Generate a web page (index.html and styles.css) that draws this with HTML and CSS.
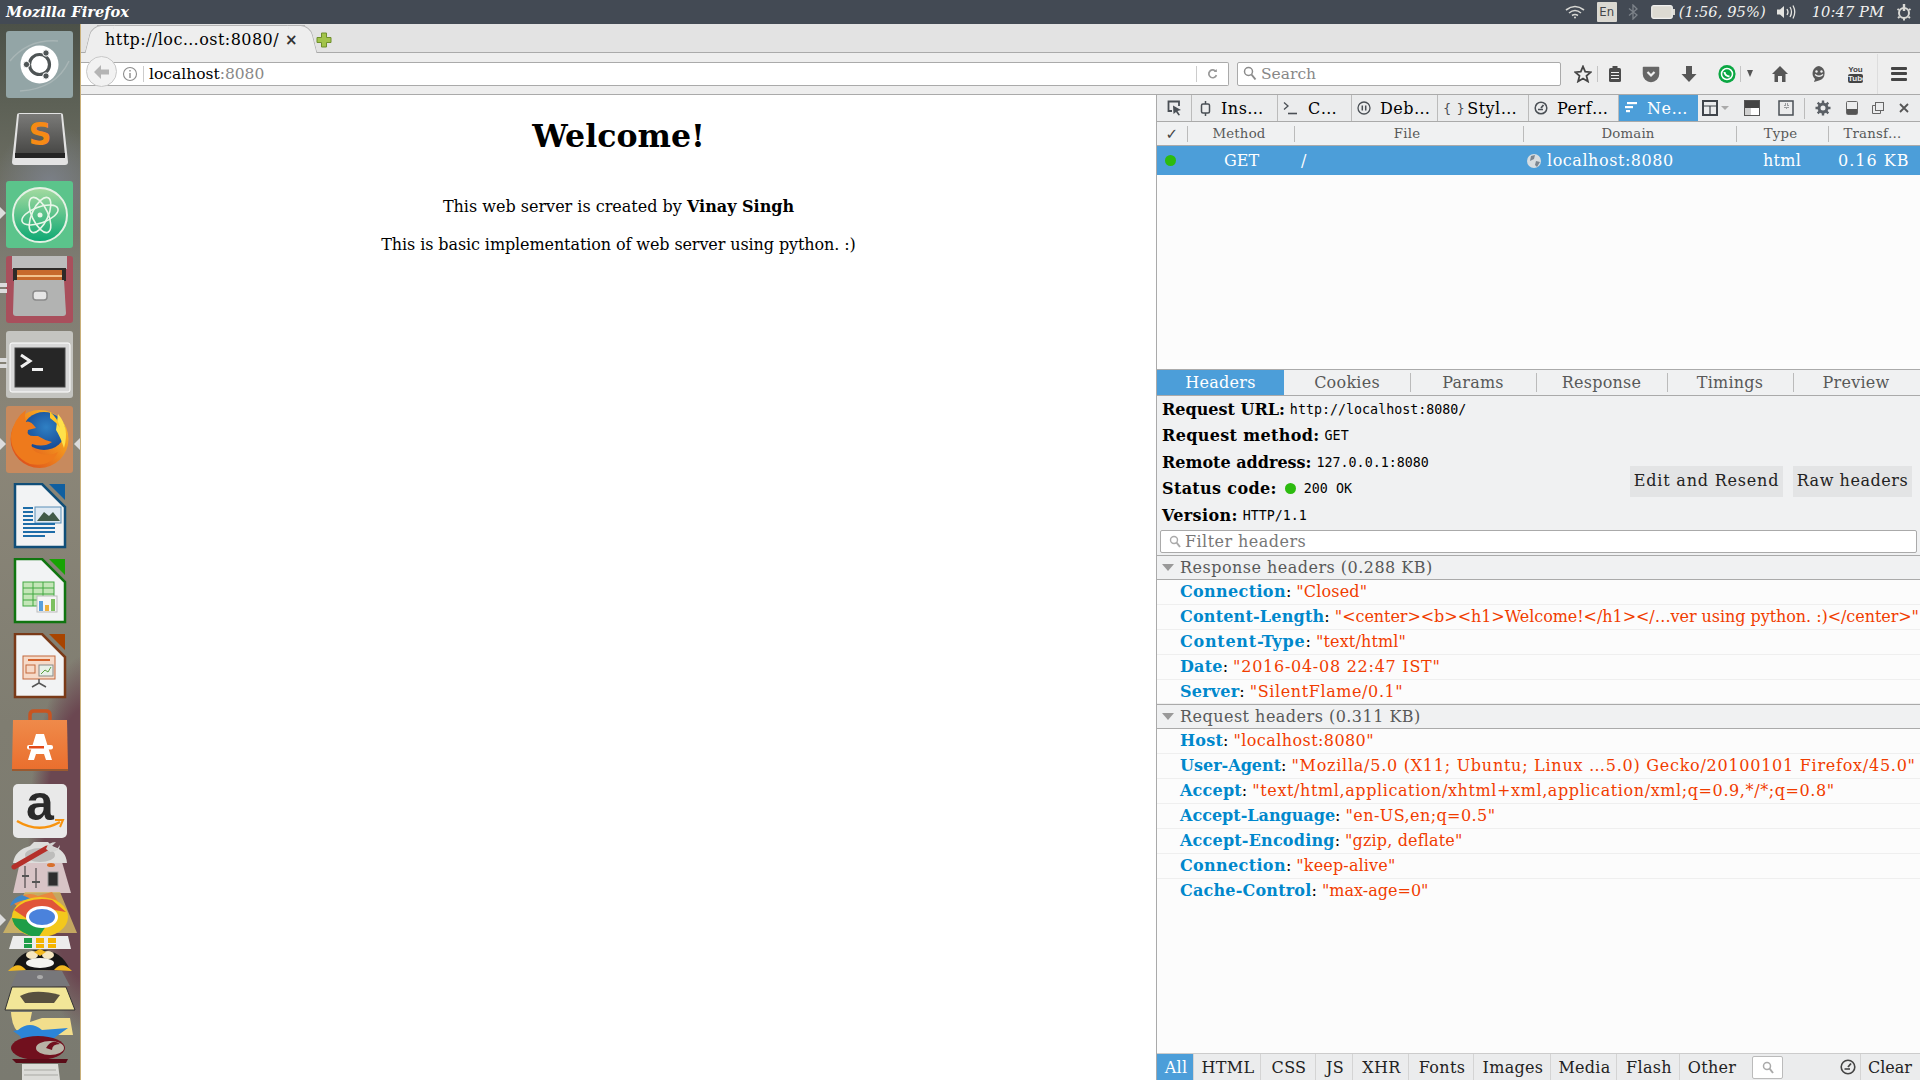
FILE: index.html
```html
<!DOCTYPE html>
<html lang="en">
<head>
  <meta charset="UTF-8" />
  <title>Mozilla Firefox</title>
  <link rel="stylesheet" href="styles.css">
</head>
<body>
  <header class="panel">
    <span class="panel-title">Mozilla Firefox</span>
    <div class="panel-tray">
      <svg class="tray-wifi" width="20" height="14" viewBox="0 0 20 14" fill="none" stroke="#d8d8d4" stroke-width="1.6"><path d="M1 5 Q10 -2 19 5"/><path d="M4 8 Q10 3 16 8"/><path d="M7 10.5 Q10 8.5 13 10.5"/><circle cx="10" cy="12.6" r="1" fill="#d8d8d4" stroke="none"/></svg>
      <span class="tray-lang">En</span>
      <svg class="tray-bt" width="10" height="16" viewBox="0 0 10 16" fill="none" stroke="#7d838a" stroke-width="1.3"><path d="M1 4.5 L9 11 L5 15 V1 L9 5 L1 11.5"/></svg>
      <svg class="tray-batt" width="24" height="14" viewBox="0 0 24 14"><rect x="0.7" y="0.7" width="20.6" height="12.6" rx="2" fill="#dcdad2" stroke="#f0f0ee" stroke-width="1.2"/><rect x="22" y="4" width="2" height="6" fill="#dcdad2"/></svg>
      <span class="tray-text tray-batt-text">(1:56, 95%)</span>
      <svg class="tray-vol" width="20" height="16" viewBox="0 0 20 16" fill="none" stroke="#e4e4e0" stroke-width="1.3"><path d="M1 5.5 H4 L8 2 V14 L4 10.5 H1 Z" fill="#e4e4e0" stroke="none"/><path d="M11 5 Q13 8 11 11"/><path d="M14 3 Q17 8 14 13"/><path d="M17 1.5 Q20.5 8 17 14.5"/></svg>
      <span class="tray-text tray-clock">10:47 PM</span>
      <svg class="tray-gear" width="16" height="18" viewBox="0 0 16 18" fill="none" stroke="#d8d8d4" stroke-width="2"><circle cx="8" cy="10" r="5"/><path d="M8 1 V8" stroke-width="2.4"/><path d="M1.5 6 L3 7 M14.5 6 L13 7 M2 15 L3.5 13.7 M14 15 L12.5 13.7 M8 15 V17.5"/></svg>
    </div>
  </header>

  <div class="desktop">
    <nav class="launcher">
      <div class="slot"><span class="tile tile-ubuntu">
        <svg width="67" height="67" viewBox="0 0 67 67"><path d="M4 30 Q22 8 52 10" fill="none" stroke="#b5c0c0" stroke-width="1.5" opacity=".6"/><path d="M14 60 Q50 58 63 30" fill="none" stroke="#b5c0c0" stroke-width="1.5" opacity=".6"/><circle cx="33.500" cy="33.500" r="19" fill="#fff"/><circle cx="33.500" cy="33.500" r="10" fill="none" stroke="#4e5455" stroke-width="3.200"/><circle cx="40" cy="22" r="3.200" fill="#4e5455" stroke="#fff"/><circle cx="20.500" cy="33.500" r="3.200" fill="#4e5455" stroke="#fff"/><circle cx="40" cy="45" r="3.200" fill="#4e5455" stroke="#fff"/></svg>
      </span></div>
      <div class="slot">
        <svg width="62" height="56" viewBox="0 0 62 56"><defs><linearGradient id="subTop" x1="0" y1="0" x2="0" y2="1"><stop offset="0" stop-color="#7a7a78"/><stop offset="1" stop-color="#454543"/></linearGradient></defs><path d="M3 50 L8 3 Q8 1 11 1 H51 Q54 1 54 3 L59 50 Q59 53 56 53 H6 Q3 53 3 50 Z" fill="#e3e3e3"/><path d="M6 44 L10 2 H52 L56 44 Z" fill="url(#subTop)"/><rect x="6" y="41" width="50" height="5" fill="#252525"/><text x="31" y="33" class="sublime-s">S</text></svg>
      </div>
      <div class="slot"><span class="tile tile-atom">
        <svg width="67" height="67" viewBox="0 0 67 67" fill="none"><defs><linearGradient id="atomFill" x1="0" y1="0" x2="0" y2="1"><stop offset="0" stop-color="#a5dba0"/><stop offset="1" stop-color="#0ca873"/></linearGradient></defs><circle cx="34" cy="34" r="27" fill="url(#atomFill)" stroke="#e4f1e4" stroke-width="2"/><g stroke="#e8f6e8" stroke-width="1.600"><ellipse cx="34" cy="34" rx="19" ry="8" transform="rotate(-20 34 34)"/><ellipse cx="34" cy="34" rx="19" ry="8" transform="rotate(65 34 34)"/><ellipse cx="34" cy="34" rx="19" ry="8" transform="rotate(115 34 34)"/></g><circle cx="34" cy="34" r="2.500" fill="#e8f6e8"/></svg>
      </span></div>
      <div class="slot"><span class="tile tile-files">
        <svg width="67" height="67" viewBox="0 0 67 67"><rect x="6" y="-1" width="55" height="14" fill="#bcbcbc"/><rect x="7" y="12" width="53" height="13" fill="#2e2a28"/><rect x="11" y="14" width="45" height="11" fill="#c76a2c"/><rect x="11" y="19" width="45" height="2" fill="#f2c28c"/><path d="M8 24 H58 L60 57 Q60 60 57 60 H10 Q7 60 7 57 Z" fill="#b2b3b2"/><rect x="27" y="35" width="14" height="9" rx="3" fill="#e6e6e6" stroke="#8a8a8a" stroke-width="1.500"/></svg>
      </span><i class="pip pip-files"></i></div>
      <div class="slot"><span class="tile tile-term">
        <svg width="67" height="67" viewBox="0 0 67 67"><rect x="4" y="12" width="60" height="49" rx="2" fill="#d8d8d8" stroke="#fff"/><rect x="9" y="17" width="50" height="39" fill="#262626" stroke="#444"/><path d="M15 24 L24 30 L15 36" fill="none" stroke="#f0f0f0" stroke-width="3"/><rect x="26" y="37" width="11" height="3" fill="#f0f0f0"/></svg>
      </span><i class="pip pip-term"></i></div>
      <div class="slot"><span class="tile tile-fox">
        <svg width="67" height="67" viewBox="0 0 67 67"><defs><radialGradient id="foxGlobe" cx=".55" cy=".4" r=".6"><stop offset="0" stop-color="#2f80c4"/><stop offset="1" stop-color="#174a94"/></radialGradient><linearGradient id="foxTail" x1="1" y1="0" x2="0" y2="1"><stop offset="0" stop-color="#ffd02a"/><stop offset=".45" stop-color="#f08a1e"/><stop offset="1" stop-color="#d8401a"/></linearGradient></defs><circle cx="33.500" cy="33" r="29" fill="url(#foxTail)"/><ellipse cx="38" cy="25" rx="21" ry="19" fill="url(#foxGlobe)"/><path d="M20 4 Q8 12 5 30 Q5 50 24 58 Q44 62 52 46 Q42 52 30 46 Q24 42 26 38 Q38 42 46 36 Q38 34 32 30 L28 30 Q20 30 22 24 L30 22 Q24 14 20 16 Q18 10 20 4 Z" fill="#ee7a1c"/><path d="M52 8 Q64 22 58 42 Q54 30 50 24 Z" fill="#ffe14a"/><path d="M44 6 Q52 12 54 22 Q50 16 44 12 Z" fill="#ffc628"/></svg>
      </span></div>
      <div class="slot">
        <svg class="doc" width="54" height="66" viewBox="0 0 54 66"><path d="M36 1 H52 V17 Z" fill="#105fa0"/><path d="M2 1 H29 L52 24 V64 H2 Z" fill="#f2f3f4" stroke="#104e78" stroke-width="2.500"/><rect x="22" y="24" width="26" height="16" fill="#dfe9f2" stroke="#5a90b8"/><path d="M24 38 L31 29 L36 33 L40 29 L47 38 Z" fill="#415a48"/><g fill="#1e6da8"><rect x="10" y="24" width="10" height="2"/><rect x="10" y="28" width="10" height="2"/><rect x="10" y="32" width="10" height="2"/><rect x="10" y="36" width="10" height="2"/><rect x="10" y="40" width="32" height="2"/><rect x="10" y="44" width="32" height="2"/><rect x="10" y="48" width="32" height="2"/><rect x="10" y="52" width="22" height="2"/></g></svg>
      </div>
      <div class="slot">
        <svg class="doc" width="54" height="66" viewBox="0 0 54 66"><path d="M36 1 H52 V17 Z" fill="#18a303"/><path d="M2 1 H29 L52 24 V64 H2 Z" fill="#f2f3f4" stroke="#107510" stroke-width="2.500"/><rect x="10" y="24" width="31" height="24" fill="#c4e6b8" stroke="#43a843"/><path d="M10 30 H41 M10 36 H41 M10 42 H41 M20 24 V48 M30 24 V48" stroke="#43a843"/><rect x="24" y="38" width="20" height="16" fill="#f5f5f5" stroke="#bbb"/><rect x="26" y="43" width="4" height="10" fill="#5aa0dc"/><rect x="32" y="47" width="4" height="6" fill="#eeb03c"/><rect x="38" y="41" width="4" height="12" fill="#7cc060"/></svg>
      </div>
      <div class="slot">
        <svg class="doc" width="54" height="66" viewBox="0 0 54 66"><path d="M36 1 H52 V17 Z" fill="#a84400"/><path d="M2 1 H29 L52 24 V64 H2 Z" fill="#f2f3f4" stroke="#7a3a18" stroke-width="2.500"/><rect x="10" y="23" width="32" height="23" fill="#f6dac8" stroke="#c2683c"/><rect x="15" y="26" width="22" height="2" fill="#d4622c"/><rect x="13" y="32" width="9" height="8" fill="none" stroke="#c2683c"/><rect x="26" y="32" width="14" height="11" fill="#e8f0e8" stroke="#888"/><path d="M28 41 L32 37 L35 39 L38 34" fill="none" stroke="#5aa040"/><path d="M26 46 V50 M26 50 L19 54 M26 50 L33 54" stroke="#555" stroke-width="1.500"/></svg>
      </div>
      <div class="slot">
        <svg width="58" height="62" viewBox="0 0 58 62"><defs><linearGradient id="bagFill" x1="0" y1="0" x2="0" y2="1"><stop offset="0" stop-color="#ef8a4a"/><stop offset="1" stop-color="#ea6f2e"/></linearGradient></defs><path d="M19 16 V6 Q19 2 23 2 H35 Q39 2 39 6 V16" fill="none" stroke="#c85420" stroke-width="3.500"/><path d="M2 11 H56 L57 60 H1 Z" fill="url(#bagFill)"/><rect x="1" y="60" width="56" height="2" fill="#9a5a30"/><path d="M25 25 H33 L41 51 H35 L33 45 H25 L23 51 H17 Z" fill="#fff"/><rect x="16" y="36" width="26" height="4.500" rx="2" fill="#fff"/><rect x="18" y="37" width="15" height="2.500" fill="#e34a1a"/></svg>
      </div>
      <div class="slot slot-amazon">
        <svg class="amazon" width="54" height="54" viewBox="0 0 54 54"><rect width="54" height="54" rx="5" fill="#e9e9e9"/><text x="27" y="36" class="amazon-a">a</text><path d="M4 37 Q26 50 47 38" fill="none" stroke="#f7930e" stroke-width="2.500"/><path d="M42 36 L50 36 L47 43" fill="none" stroke="#f7930e" stroke-width="2"/></svg>
      </div>
      <svg class="stack" width="81" height="240" viewBox="0 0 81 240">
        <!-- squashed tail of the launcher -->
        <path d="M13 53 L20 22 H62 L71 53 Z" fill="#d8c4c6"/>
        <path d="M25 26 V48 M36 28 V48" stroke="#6a6264" stroke-width="1.500"/>
        <path d="M22 36 H29 M32 42 H40" stroke="#555" stroke-width="2"/>
        <rect x="48" y="32" width="10" height="14" fill="#2e2e2e" stroke="#999"/>
        <ellipse cx="51" cy="25" rx="4" ry="2" fill="#d8702c"/>
        <path d="M13 23 Q15 10 30 6 L34 2 H48 L52 6 Q66 10 67 23 Z" fill="#dededc"/>
        <ellipse cx="40" cy="15" rx="15" ry="7" fill="#bdbdbb"/>
        <path d="M14 27 L47 8" stroke="#b5302a" stroke-width="5" stroke-linecap="round"/>
        <path d="M46 9 Q48 2 56 2 L52 6 L57 9 L60 5 Q60 12 50 12 Z" fill="#d4d4d2"/>
        <path d="M3 93 L25 52 H60 L77 93 Z" fill="#d4b964" opacity=".85"/>
        <path d="M12 62 Q26 50 38 56 L52 52 L62 68 L44 72 L22 70 Z" fill="#e8873f"/>
        <path d="M22 55 Q12 58 10 66 Q24 58 34 60 Z" fill="#3d86c8"/>
        <ellipse cx="40" cy="77" rx="28" ry="20" fill="#f3c81c"/>
        <path d="M14 70 Q28 56 52 60 L66 72 L42 68 L26 78 Z" fill="#e0553a"/>
        <path d="M12 78 Q14 92 38 98 L46 86 L30 80 Z" fill="#1e9e48"/>
        <ellipse cx="42" cy="77" rx="16" ry="11" fill="#fff"/>
        <ellipse cx="42" cy="77" rx="13" ry="8" fill="#4a82dc"/>
        <path d="M13 96 H68 L71 109 H9 Z" fill="#ececec"/>
        <rect x="24" y="98" width="8" height="5" fill="#1e9e48"/><rect x="36" y="98" width="8" height="5" fill="#f5b400"/><rect x="48" y="98" width="8" height="5" fill="#f5b400"/>
        <rect x="24" y="104" width="8" height="4" fill="#1e9e48"/><rect x="36" y="104" width="8" height="4" fill="#f5b400"/><rect x="48" y="104" width="8" height="4" fill="#f5b400"/>
        <path d="M12 130 Q18 110 40 110 Q62 110 70 130 Z" fill="#161616"/>
        <ellipse cx="32" cy="115" rx="6" ry="4" fill="#f5e6c0"/><ellipse cx="48" cy="115" rx="6" ry="4" fill="#f5e6c0"/>
        <ellipse cx="40" cy="123" rx="14" ry="5" fill="#f4f4f0"/>
        <path d="M8 131 Q18 120 26 130 Z M72 131 Q62 120 54 130 Z M34 112 L40 109 L46 112 L40 116 Z" fill="#f2b820"/>
        <path d="M11 146 L18 131 H62 L70 146 Z" fill="#77777a"/>
        <ellipse cx="40" cy="137" rx="3" ry="2" fill="#aaa"/>
        <path d="M5 170 L12 147 H66 L75 170 Z" fill="#f2e698" stroke="#333"/>
        <path d="M20 156 Q34 148 60 155 L54 163 H25 Z" fill="#57503f"/>
        <path d="M11 172 H32 L30 182 L42 178 L70 178 L73 195 H22 Q12 190 11 172 Z" fill="#f2de8c"/>
        <path d="M18 190 Q30 180 42 190 L68 188 Q54 198 46 204 Q24 210 20 196 L13 191 Z" fill="#2c85d8"/>
        <ellipse cx="38" cy="208" rx="27" ry="12" fill="#71101e"/>
        <ellipse cx="50" cy="208" rx="14" ry="7" fill="#b8b3a6"/>
        <path d="M46 208 Q52 198 60 204 Q52 204 52 210 Z" fill="#71101e"/>
        <path d="M12 219 H68 L66 223 H16 Z" fill="#5a0c18"/>
        <path d="M22 224 H58 L60 240 H22 Z" fill="#dcdcd8"/>
        <path d="M24 230 H56 M24 235 H58" stroke="#a9a9a4"/>
      </svg>
      <i class="pip pip-atom"></i>
      <i class="pip pip-fox"></i>
      <i class="pip pip-fox-r"></i>
      <i class="pip pip-chrome"></i>
    </nav>

    <div class="browser">
      <div class="tabstrip">
        <div class="tab">
          <span class="tab-label">http://loc…ost:8080/</span>
          <span class="tab-close">×</span>
        </div>
        <svg class="tab-new" width="16" height="16" viewBox="0 0 16 16"><path d="M5.500 1 H10.500 V5.500 H15 V10.500 H10.500 V15 H5.500 V10.500 H1 V5.500 H5.500 Z" fill="#a2c44a" stroke="#6f8f2c"/></svg>
      </div>

      <div class="navbar">
        <span class="back">
          <svg width="18" height="16" viewBox="0 0 18 16"><path d="M8 1 L1 8 L8 15 V10.500 H16 V5.500 H8 Z" fill="#b4b4b4"/></svg>
        </span>
        <div class="urlbar">
          <svg class="url-info" width="16" height="16" viewBox="0 0 16 16" fill="none" stroke="#8c8c8c" stroke-width="1.100"><circle cx="8" cy="8" r="6.500"/><path d="M8 7 V12 M8 4 V5.500" stroke-width="1.400"/></svg>
          <span class="url-sep"></span>
          <span class="url-text">localhost<span class="url-port">:8080</span></span>
          <span class="url-sep url-sep-r"></span>
          <svg class="url-reload" width="11" height="12" viewBox="0 0 14 14" fill="none" stroke="#999" stroke-width="2.200"><path d="M11.500 4 A5 5 0 1 0 12 8.500"/><path d="M8.500 4.500 H12.500 V0.500" fill="#999" stroke="none"/></svg>
        </div>
        <div class="searchbar">
          <svg width="14" height="15" viewBox="0 0 14 15" fill="none" stroke="#8b8b8b" stroke-width="1.500"><circle cx="5.500" cy="5.500" r="4"/><path d="M8.500 8.500 L12.500 13.500" stroke-width="2"/></svg>
          <span>Search</span>
        </div>
        <div class="nav-icons">
          <svg class="ni-star" width="18" height="18" viewBox="0 0 18 18"><path d="M9 1.500 L11.200 6.700 L16.800 7.200 L12.500 10.900 L13.900 16.400 L9 13.500 L4.100 16.400 L5.500 10.900 L1.200 7.200 L6.800 6.700 Z" fill="none" stroke="#444" stroke-width="1.800"/></svg>
          <i class="ni-sep"></i>
          <svg class="ni-clip" width="14" height="18" viewBox="0 0 14 18"><rect x="1" y="3" width="12" height="14" rx="1.500" fill="#4c4c4c"/><rect x="4.500" y="1" width="5" height="4" fill="#4c4c4c"/><path d="M3 7.500 H11 M3 10.500 H11 M3 13.500 H11" stroke="#f0f0f0"/></svg>
          <svg class="ni-pocket" width="18" height="18" viewBox="0 0 18 18"><path d="M1.500 2.500 H16.500 V9 A7.500 7.500 0 0 1 1.500 9 Z" fill="#666" stroke="#666" stroke-width="1.500" stroke-linejoin="round"/><path d="M5.500 7 L9 10.500 L12.500 7" fill="none" stroke="#f0f0f0" stroke-width="2.200"/></svg>
          <svg class="ni-down" width="16" height="18" viewBox="0 0 16 18"><path d="M5 1 H11 V9 H15.500 L8 17 L0.500 9 H5 Z" fill="#565656"/></svg>
          <svg class="ni-wa" width="18" height="20" viewBox="0 0 18 20"><rect x="0.500" y="1" width="17" height="18" rx="8.500" fill="#0aa742"/><circle cx="9" cy="10" r="5.500" fill="none" stroke="#fff" stroke-width="1.500"/><path d="M6.500 8 Q7 12 11.500 12.500" fill="none" stroke="#fff" stroke-width="2"/></svg>
          <i class="ni-sep ni-sep-wa"></i>
          <span class="ni-caret"></span>
          <svg class="ni-home" width="18" height="18" viewBox="0 0 18 18"><path d="M9 1 L17 9 H14.500 V17 H11 V11 H7 V17 H3.500 V9 H1 Z" fill="#555"/></svg>
          <svg class="ni-smile" width="18" height="18" viewBox="0 0 18 18"><path d="M9 1 A7.500 7.500 0 0 1 9 15.500 L4 17 L5 14 A7.500 7.500 0 0 1 9 1 Z" fill="#5a5a5a"/><circle cx="6.500" cy="6.500" r="1.200" fill="#f0f0f0"/><circle cx="11.500" cy="6.500" r="1.200" fill="#f0f0f0"/><path d="M5 9.500 Q9 13 13 9.500" fill="none" stroke="#f0f0f0" stroke-width="1.300"/></svg>
          <span class="ni-yt"><span>You</span><span class="ni-yt-tube">Tube</span></span>
          <i class="ni-sep ni-sep-menu"></i>
          <span class="ni-menu"><i></i><i></i><i></i></span>
        </div>
      </div>

      <div class="content">
        <main class="page">
          <h1>Welcome!</h1>
          <p>This web server is created by <b>Vinay Singh</b></p>
          <p>This is basic implementation of web server using python. :)</p>
        </main>

        <aside class="devtools">
          <div class="dt-toolbar">
            <span class="dt-pick"><svg width="15" height="16" viewBox="0 0 15 16" fill="none" stroke="#4a4f55" stroke-width="1.800"><path d="M5 11 H1.500 V1.500 H12 V6"/><path d="M6 5.500 L14 10 L10.500 11 L13 15 L11.500 15.500 L9 12 L6.500 14 Z" fill="#4a4f55" stroke="none"/></svg></span>
            <span class="dt-tab w-inspector"><svg width="13" height="15" viewBox="0 0 13 15" fill="none" stroke="#4a4f55" stroke-width="1.500"><rect x="2.500" y="3" width="8" height="9" rx="1.500"/><path d="M6.500 0 V3 M6.500 12 V15"/></svg>Ins…</span>
            <span class="dt-tab w-console"><svg width="16" height="15" viewBox="0 0 16 15" fill="none" stroke="#4a4f55" stroke-width="1.300"><path d="M1 1.500 L5 5 L1 8.500"/><path d="M5 12.500 H14" stroke-width="1.600"/></svg>C…</span>
            <span class="dt-tab w-debug"><svg width="14" height="14" viewBox="0 0 14 14" fill="none" stroke="#4a4f55" stroke-width="1.300"><circle cx="7" cy="7" r="6"/><path d="M5.300 4.500 V9.500 M8.700 4.500 V9.500" stroke-width="1.500"/></svg>Deb…</span>
            <span class="dt-tab w-style"><span class="dt-braces">{ }</span>Styl…</span>
            <span class="dt-tab w-perf"><svg width="14" height="14" viewBox="0 0 14 14" fill="none" stroke="#4a4f55" stroke-width="1.500"><circle cx="7" cy="7" r="5.800"/><path d="M7 7 L9.500 4" stroke-width="1.800"/><path d="M4 8.500 H9"/></svg>Perf…</span>
            <span class="dt-tab dt-tab-active w-net"><svg width="14" height="12" viewBox="0 0 14 12" fill="#fff"><rect x="3" y="0" width="10" height="2.200"/><rect x="1" y="4" width="8" height="2.200"/><rect x="2" y="8" width="4" height="2.200"/></svg>Ne…</span>
            <span class="dt-tools">
              <svg width="16" height="16" viewBox="0 0 16 16" fill="none" stroke="#3f444a" stroke-width="2"><rect x="1" y="1" width="14" height="14"/><path d="M1 6 H15 M8 6 V15" stroke-width="1.200"/></svg>
              <i class="dt-caret"></i>
              <svg class="dt-t-dock" width="16" height="16" viewBox="0 0 16 16"><rect x="0.500" y="0.500" width="15" height="15" fill="#fff" stroke="#555"/><rect x="1" y="1" width="14" height="7" fill="#444"/><rect x="1" y="8" width="6" height="7" fill="#d0d0d0"/></svg>
              <svg class="dt-t-frame" width="16" height="16" viewBox="0 0 16 16" fill="none" stroke="#4a4f55" stroke-width="1.500"><rect x="1" y="1" width="14" height="14"/><path d="M7 4 H10 V8 H7 Z" stroke-width="1" stroke-dasharray="1 1"/></svg>
              <i class="dt-sep"></i>
              <svg class="dt-t-gear" width="16" height="16" viewBox="0 0 16 16" fill="none" stroke="#5a5f65"><circle cx="8" cy="8" r="4" stroke-width="3"/><path d="M8 0.500 V3 M8 13 V15.500 M0.500 8 H3 M13 8 H15.500 M2.700 2.700 L4.500 4.500 M11.500 11.500 L13.300 13.300 M13.300 2.700 L11.500 4.500 M4.500 11.500 L2.700 13.300" stroke-width="2.400"/></svg>
              <svg class="dt-t-bottom" width="12" height="14" viewBox="0 0 12 14"><rect x="0.500" y="0.500" width="11" height="13" rx="1" fill="none" stroke="#666"/><rect x="1" y="8" width="10" height="5" fill="#555"/></svg>
              <svg class="dt-t-win" width="12" height="14" viewBox="0 0 12 14" fill="none" stroke="#666"><rect x="3.500" y="1.500" width="8" height="8"/><path d="M3.500 4.500 H0.500 V12.500 H8.500 V9.500"/></svg>
              <svg class="dt-t-close" width="10" height="10" viewBox="0 0 10 10"><path d="M1 1 L9 9 M9 1 L1 9" stroke="#555" stroke-width="1.800"/></svg>
            </span>
          </div>

          <div class="req-grid req-head">
            <span class="req-check">✓</span>
            <span>Method</span>
            <span>File</span>
            <span>Domain</span>
            <span>Type</span>
            <span>Transf…</span>
          </div>
          <div class="req-grid req-row">
            <span class="req-dot"><i class="dot"></i></span>
            <span>GET</span>
            <span class="req-file">/</span>
            <span class="req-domain"><svg width="14" height="14" viewBox="0 0 14 14"><circle cx="7" cy="7" r="7" fill="#d8dde0"/><path d="M4 2 L8 1 L7 5 L3 7 Z M9 7 L13 8 L10 13 L8 11 Z" fill="#7c8690"/></svg>localhost:8080</span>
            <span class="req-type">html</span>
            <span class="req-size">0.16 KB</span>
          </div>
          <div class="req-empty"></div>

          <div class="detail-tabs">
            <span class="detail-tab detail-tab-active">Headers</span>
            <span class="detail-tab">Cookies</span>
            <span class="detail-tab">Params</span>
            <span class="detail-tab detail-tab-wide">Response</span>
            <span class="detail-tab">Timings</span>
            <span class="detail-tab">Preview</span>
          </div>

          <div class="summary">
            <div class="summary-list">
              <div class="sum-row"><b>Request URL:</b> <code>http://localhost:8080/</code></div>
              <div class="sum-row sum-wide"><b>Request method:</b> <code>GET</code></div>
              <div class="sum-row"><b>Remote address:</b> <code>127.0.0.1:8080</code></div>
              <div class="sum-row sum-wide"><b>Status code:</b> <i class="dot dot-status"></i> <code>200 OK</code></div>
              <div class="sum-row sum-wide"><b>Version:</b> <code>HTTP/1.1</code></div>
            </div>
            <div class="summary-btns">
              <span class="btn btn-edit">Edit and Resend</span>
              <span class="btn btn-raw">Raw headers</span>
            </div>
          </div>
          <div class="filter-wrap">
            <div class="filter">
              <svg width="12" height="13" viewBox="0 0 12 13" fill="none" stroke="#aaa" stroke-width="1.400"><circle cx="5" cy="5" r="3.500"/><path d="M7.500 7.500 L11 12" stroke-width="2"/></svg>
              <span>Filter headers</span>
            </div>
          </div>

          <div class="hdr-group"><i class="twisty"></i>Response headers (0.288 KB)</div>
          <div class="hdr-row sp-1 key-mid"><b>Connection</b>: <em>"Closed"</em></div>
          <div class="hdr-row sp-0"><b>Content-Length</b>: <em>"&lt;center&gt;&lt;b&gt;&lt;h1&gt;Welcome!&lt;/h1&gt;&lt;/…ver using python. :)&lt;/center&gt;"</em></div>
          <div class="hdr-row sp-1 key-wide"><b>Content-Type</b>: <em>"text/html"</em></div>
          <div class="hdr-row sp-7"><b>Date</b>: <em>"2016-04-08 22:47 IST"</em></div>
          <div class="hdr-row hdr-row-end sp-6"><b>Server</b>: <em>"SilentFlame/0.1"</em></div>
          <div class="hdr-group"><i class="twisty"></i>Request headers (0.311 KB)</div>
          <div class="hdr-row sp-4"><b>Host</b>: <em>"localhost:8080"</em></div>
          <div class="hdr-row sp-7 key-tight"><b>User-Agent</b>: <em>"Mozilla/5.0 (X11; Ubuntu; Linux …5.0) Gecko/20100101 Firefox/45.0"</em></div>
          <div class="hdr-row sp-6"><b>Accept</b>: <em>"text/html,application/xhtml+xml,application/xml;q=0.9,*/*;q=0.8"</em></div>
          <div class="hdr-row sp-4 key-tight"><b>Accept-Language</b>: <em>"en-US,en;q=0.5"</em></div>
          <div class="hdr-row sp-1"><b>Accept-Encoding</b>: <em>"gzip, deflate"</em></div>
          <div class="hdr-row sp-1 key-mid"><b>Connection</b>: <em>"keep-alive"</em></div>
          <div class="hdr-row hdr-row-last"><b>Cache-Control</b>: <em>"max-age=0"</em></div>
          <div class="hdr-fill"></div>

          <div class="dt-footer">
            <div class="ft-group">
              <span class="ft ft-active">All</span>
              <span class="ft">HTML</span>
              <span class="ft">CSS</span>
              <span class="ft">JS</span>
              <span class="ft">XHR</span>
              <span class="ft">Fonts</span>
              <span class="ft">Images</span>
              <span class="ft">Media</span>
              <span class="ft">Flash</span>
              <span class="ft ft-last">Other</span>
            </div>
            <span class="ft-search"><svg width="12" height="13" viewBox="0 0 12 13" fill="none" stroke="#aaa" stroke-width="1.500"><circle cx="5" cy="5" r="3.500"/><path d="M7.500 7.500 L11 12" stroke-width="2"/></svg></span>
            <span class="ft-timer"><svg width="16" height="16" viewBox="0 0 16 16" fill="none" stroke="#444" stroke-width="1.600"><circle cx="8" cy="8" r="6.800"/><path d="M8 8 L11 4.500" stroke-width="1.800"/><path d="M4.500 10 H10"/></svg></span>
            <span class="ft-clear">Clear</span>
          </div>
        </aside>
      </div>
    </div>
  </div>
</body>
</html>
```

FILE: styles.css
```css
* {
  box-sizing: border-box;
}
html, body {
  margin: 0;
  height: 100%;
}
body {
  width: 1920px;
  height: 1080px;
  overflow: hidden;
  display: flex;
  flex-direction: column;
  font-family: "DejaVu Serif", serif;
  font-size: 16px;
  color: #000;
  background: #fff;
}
svg {
  display: block;
  flex: none;
}

/* top panel */
.panel {
  height: 24px;
  flex: none;
  display: flex;
  align-items: center;
  justify-content: space-between;
  padding-bottom: 1px;
  background: #434a54;
  color: #fff;
}
.panel-title {
  margin-left: 6px;
  font-weight: bold;
  font-style: italic;
  font-size: 14.6px;
}
.panel-tray {
  display: flex;
  align-items: center;
}
.tray-lang {
  width: 20px;
  height: 20px;
  margin-left: 12px;
  background: #dbd9d2;
  color: #43464a;
  font: 13px/20px "DejaVu Sans Condensed", "DejaVu Sans", sans-serif;
  text-align: center;
  border-radius: 1px;
}
.tray-bt {
  margin-left: 11px;
}
.tray-batt {
  margin-left: 13px;
}
.tray-text {
  font-style: italic;
  color: #f2f2f0;
  font-size: 14.6px;
  letter-spacing: .1px;
}
.tray-batt-text {
  margin-left: 4px;
}
.tray-vol {
  margin-left: 10px;
}
.tray-clock {
  margin-left: 16px;
}
.tray-gear {
  margin: 0 8px 0 12px;
}

.desktop {
  flex: 1;
  display: flex;
  min-height: 0;
}

/* launcher */
.launcher {
  position: relative;
  width: 81px;
  flex: none;
  padding-top: 3px;
  display: flex;
  flex-direction: column;
  border-right: 1px solid #c9b07a;
  background:
    radial-gradient(ellipse 60px 190px at 88px 820px, #6b4751 0 72%, rgba(107, 71, 81, 0) 100%),
    radial-gradient(ellipse 55px 60px at 50px 160px, #7b8088 0%, rgba(123, 128, 136, 0) 100%),
    linear-gradient(to bottom, #4c5148 0, #5d6156 80px, #7e7c72 240px, #8b8678 420px, #7f7d71 700px, #7a7a70 100%);
}
.slot {
  height: 75px;
  flex: none;
  display: flex;
  align-items: center;
  justify-content: center;
  width: 80px;
  position: relative;
}
.slot-amazon {
  height: 62px;
  margin-top: 3px;
}
.doc {
  margin-top: 2px;
}
.stack {
  position: absolute;
  left: 0;
  bottom: 0;
}
.tile {
  width: 67px;
  height: 67px;
  border-radius: 3px;
  overflow: hidden;
  margin-left: -1px;
}
.tile-ubuntu {
  background: #93a5a6;
}
.tile-atom {
  background: #5bc48b;
}
.tile-files {
  background: #a94f5c;
}
.tile-term {
  background: #c4c4c0;
}
.tile-fox {
  background: #c78a5e;
}
.sublime-s {
  font: bold 32px "DejaVu Sans", sans-serif;
  fill: #f78a15;
  text-anchor: middle;
}
.amazon {
  overflow: visible;
}
.amazon-a {
  font: bold 50px "Liberation Sans", sans-serif;
  fill: #2a2a2a;
  text-anchor: middle;
}
.pip {
  position: absolute;
  left: 0;
  width: 0;
  height: 0;
  border-style: solid;
  border-width: 6px 0 6px 6px;
  border-color: transparent transparent transparent #dcdcdc;
}
.pip-atom {
  top: 183px;
}
.pip-fox {
  top: 414px;
  left: 0;
}
.pip-fox-r {
  top: 414px;
  left: auto;
  right: 0;
  border-width: 6px 6px 6px 0;
  border-color: transparent #dcdcdc transparent transparent;
}
.pip-chrome {
  top: 890px;
}
.slot .pip-files,
.slot .pip-term {
  top: 31px;
  width: 7px;
  height: 4px;
  border: 0;
  background: #dcdcdc;
  box-shadow: 0 6px 0 #dcdcdc;
}

/* browser chrome */
.browser {
  flex: 1;
  min-width: 0;
  display: flex;
  flex-direction: column;
}
.tabstrip {
  height: 29px;
  flex: none;
  display: flex;
  align-items: flex-end;
  padding-left: 16px;
  background: #e3e3e3;
  border-bottom: 1px solid #aaa;
}
.tab {
  position: relative;
  width: 208px;
  height: 28px;
  margin-bottom: -1px;
  display: flex;
  align-items: center;
  padding: 0 0 0 8px;
  background: #eee;
  border-top: 1px solid #b4b4b4;
  font-size: 16px;
  letter-spacing: .45px;
}
.tab::before,
.tab::after {
  content: "";
  position: absolute;
  top: -1px;
  bottom: 0;
  width: 22px;
  background: #eee;
  border-top: 1px solid #b4b4b4;
  z-index: 0;
}
.tab::before {
  left: -9px;
  border-left: 1px solid #b4b4b4;
  border-radius: 10px 0 0 0;
  transform: skewX(-14deg);
}
.tab::after {
  right: -9px;
  border-right: 1px solid #b4b4b4;
  border-radius: 0 10px 0 0;
  transform: skewX(14deg);
}
.tab-label {
  position: relative;
  z-index: 1;
  width: 180px;
  white-space: nowrap;
}
.tab-close {
  position: relative;
  z-index: 1;
  font-family: "DejaVu Sans", sans-serif;
  font-weight: bold;
  font-size: 15px;
  color: #333;
}
.tab-new {
  margin: 0 0 4px 11px;
}
.navbar {
  height: 42px;
  flex: none;
  position: relative;
  display: flex;
  align-items: center;
  background: #eee;
  border-bottom: 1px solid #aaa;
}
.back {
  position: absolute;
  left: 5px;
  top: 3px;
  width: 31px;
  height: 31px;
  display: flex;
  align-items: center;
  justify-content: center;
  background: #f2f2f2;
  border: 1px solid #c8c8c8;
  border-radius: 50%;
}
.urlbar {
  width: 1148px;
  height: 24px;
  padding-left: 41px;
  display: flex;
  align-items: center;
  background: #fff;
  border: 1px solid #aaa;
  border-left: 0;
  border-radius: 0 2px 2px 0;
  font-size: 15.500px;
}
.url-sep {
  width: 1px;
  height: 16px;
  margin: 0 5px 0 5px;
  background: #ccc;
}
.url-text {
  flex: 1;
  color: #000;
}
.url-port {
  color: #888;
}
.url-sep-r {
  margin: 0 10px 0 0;
}
.url-reload {
  margin-right: 10px;
}
.searchbar {
  width: 324px;
  height: 24px;
  margin-left: 8px;
  padding-left: 5px;
  display: flex;
  align-items: center;
  gap: 4px;
  background: #fff;
  border: 1px solid #aaa;
  border-radius: 2px;
  color: #888;
  font-size: 15.500px;
}
.nav-icons {
  flex: 1;
  display: flex;
  align-items: center;
  height: 100%;
}
.ni-star {
  margin-left: 13px;
}
.ni-sep {
  width: 1px;
  height: 16px;
  background: #c4c4c4;
  margin-left: 5px;
}
.ni-clip {
  margin-left: 10px;
}
.ni-pocket {
  margin-left: 20px;
}
.ni-down {
  margin-left: 21px;
}
.ni-wa {
  margin-left: 21px;
}
.ni-sep-wa {
  margin-left: 4px;
}
.ni-caret {
  width: 0;
  height: 0;
  margin-left: 6px;
  border-style: solid;
  border-width: 7px 3.500px 0;
  border-color: #555 transparent transparent;
}
.ni-home {
  margin-left: 18px;
}
.ni-smile {
  margin-left: 21px;
}
.ni-yt {
  margin-left: 20px;
  width: 15px;
  display: flex;
  flex-direction: column;
  align-items: center;
  font: bold 8px/9px "Liberation Sans Narrow", "Liberation Sans", sans-serif;
  color: #444;
}
.ni-yt-tube {
  background: #444;
  color: #eee;
  width: 15px;
  border-radius: 2px;
  text-align: center;
}
.ni-sep-menu {
  height: 40px;
  margin-left: 14px;
  background: #ddd;
}
.ni-menu {
  margin-left: 13px;
  width: 16px;
  display: flex;
  flex-direction: column;
  gap: 2.500px;
}
.ni-menu i {
  height: 3px;
  background: #444;
  border-radius: 1px;
}

.content {
  flex: 1;
  display: flex;
  min-height: 0;
}

/* the page itself */
.page {
  width: 1075px;
  flex: none;
  text-align: center;
}
.page h1 {
  margin: 22px 0 0;
  font-size: 31.600px;
  line-height: 37px;
}
.page p {
  margin: 0;
  line-height: 19px;
}
.page h1 + p {
  margin-top: 43px;
}
.page p + p {
  margin-top: 19px;
  letter-spacing: -.1px;
}

/* devtools */
.devtools {
  flex: 1;
  min-width: 0;
  display: flex;
  flex-direction: column;
  border-left: 1px solid #aaa;
  background: #fcfcfc;
}
.dt-toolbar {
  height: 27px;
  flex: none;
  display: flex;
  background: #ebeced;
  border-bottom: 1px solid #aaa;
}
.dt-pick {
  width: 35px;
  flex: none;
  display: flex;
  align-items: center;
  justify-content: center;
  border-right: 1px solid #bbb;
}
.dt-tab {
  flex: none;
  display: flex;
  align-items: center;
  gap: 9px;
  padding-left: 5px;
  border-right: 1px solid #bbb;
  white-space: nowrap;
  letter-spacing: .5px;
}
.w-inspector { width: 86px; padding-left: 7px; }
.w-console { width: 74px; }
.w-debug { width: 86px; }
.w-style { width: 91px; }
.w-perf { width: 90px; }
.w-net { width: 79px; }
.dt-braces {
  margin-right: -7px;
  font-family: "DejaVu Sans", sans-serif;
  color: #4a4f55;
  font-size: 13px;
}
.dt-tab-active {
  background: #4c9ed9;
  color: #fff;
  border-right: 0;
}
.dt-tools {
  flex: 1;
  display: flex;
  align-items: center;
  padding-left: 4px;
}
.dt-caret {
  width: 0;
  height: 0;
  margin: 0 0 0 3px;
  border-style: solid;
  border-width: 4px 4px 0;
  border-color: #aaa transparent transparent;
}
.dt-t-dock { margin-left: 15px; }
.dt-t-frame { margin-left: 18px; }
.dt-sep {
  width: 1px;
  height: 21px;
  margin-left: 10px;
  background: #bbb;
}
.dt-t-gear { margin-left: 10px; }
.dt-t-bottom { margin-left: 15px; }
.dt-t-win { margin-left: 14px; }
.dt-t-close { margin-left: 15px; }

.req-grid {
  display: grid;
  grid-template-columns: 31px 107px 229px 213px 92px 91px;
  align-items: center;
  flex: none;
}
.req-head {
  height: 24px;
  padding-top: 1px;
  background: #f0f1f2;
  border-bottom: 1px solid #aaa;
  color: #585959;
  font-size: 13.300px;
  letter-spacing: .2px;
  text-align: center;
}
.req-head span {
  height: 16px;
  line-height: 16px;
  padding-right: 4px;
  border-right: 1px solid #bbb;
  white-space: nowrap;
}
.req-head span:last-child {
  border-right: 0;
}
.req-head .req-check {
  padding-right: 0;
  color: #444;
  font-size: 15px;
  font-family: "DejaVu Sans", sans-serif;
}
.req-row {
  height: 29px;
  background: #4c9ed9;
  color: #fff;
}
.req-row span {
  white-space: nowrap;
}
.req-row span:nth-child(2) {
  text-align: center;
}
.req-dot {
  padding-left: 8px;
}
.dot {
  display: block;
  width: 11px;
  height: 11px;
  border-radius: 50%;
  background: #2cbb0f;
}
.req-file {
  padding-left: 6px;
}
.req-domain {
  display: flex;
  align-items: center;
  gap: 5px;
  padding-left: 3px;
  letter-spacing: .55px;
}
.req-domain svg {
  margin-right: 1px;
}
.req-type {
  padding-left: 26px;
  letter-spacing: .3px;
}
.req-size {
  padding-left: 9px;
  letter-spacing: 1px;
}
.req-empty {
  height: 194px;
  flex: none;
  background: #fcfcfc;
}
.detail-tabs {
  height: 27px;
  flex: none;
  display: flex;
  background: #f0f1f2;
  border-top: 1px solid #aaa;
  border-bottom: 1px solid #aaa;
  letter-spacing: .25px;
}
.detail-tab {
  width: 126px;
  flex: none;
  text-align: center;
  color: #585959;
  line-height: 25px;
  position: relative;
}
.detail-tab-active {
  width: 127px;
  background: #4c9ed9;
  color: #fff;
}
.detail-tab-wide {
  width: 131px;
}
.detail-tab + .detail-tab::before {
  content: "";
  position: absolute;
  left: 0;
  top: 3px;
  bottom: 3px;
  width: 1px;
  background: #bbb;
}
.detail-tab-active + .detail-tab::before {
  display: none;
}
.summary {
  flex: none;
  display: flex;
  justify-content: space-between;
  align-items: flex-end;
  background: #f0f1f2;
  padding: 0 8px 1px 5px;
}
.sum-row {
  height: 26.500px;
  display: flex;
  align-items: center;
  gap: 5px;
  white-space: nowrap;
}
.sum-wide b {
  letter-spacing: .35px;
}
code {
  font-family: "DejaVu Sans Mono", monospace;
  font-size: 13.330px;
  white-space: pre;
}
.dot-status {
  margin: 0 3px;
}
.summary-btns {
  display: flex;
  gap: 10px;
  margin-bottom: 32px;
}
.btn {
  height: 31px;
  background: #e3e4e5;
  color: #222;
  line-height: 30px;
  text-align: center;
  white-space: nowrap;
}
.btn-edit {
  width: 153px;
  letter-spacing: .8px;
}
.btn-raw {
  width: 119px;
  letter-spacing: .55px;
}
.filter-wrap {
  flex: none;
  background: #f0f1f2;
  padding: 0 3px 2px 3px;
}
.filter {
  height: 23px;
  padding-left: 8px;
  display: flex;
  align-items: center;
  gap: 4px;
  background: #fff;
  border: 1px solid #aaa;
  border-radius: 2px;
  color: #777;
  letter-spacing: .45px;
}
.hdr-group {
  height: 25px;
  flex: none;
  padding-left: 5px;
  display: flex;
  align-items: center;
  background: #f0f1f2;
  border-top: 1px solid #aaa;
  border-bottom: 1px solid #aaa;
  color: #585959;
  letter-spacing: .48px;
  white-space: nowrap;
}
.twisty {
  width: 0;
  height: 0;
  margin-right: 6px;
  border-style: solid;
  border-width: 7px 6px 0;
  border-color: #999 transparent transparent;
}
.hdr-row {
  height: 25px;
  flex: none;
  padding-left: 23px;
  line-height: 24px;
  border-bottom: 1px solid #efefef;
  white-space: nowrap;
  overflow: hidden;
}
.hdr-row b {
  color: #0088cc;
  letter-spacing: .2px;
}
.hdr-row em {
  font-style: normal;
  color: #f13c00;
}
.hdr-row-end {
  height: 24px;
}
.hdr-row-last {
  border-bottom: 0;
}
.hdr-row.key-tight b { letter-spacing: 0; }
.hdr-row.key-mid b { letter-spacing: .35px; }
.hdr-row.key-wide b { letter-spacing: .75px; }
.sp-0 em { letter-spacing: -.06px; }
.sp-1 em { letter-spacing: .15px; }
.sp-4 em { letter-spacing: .42px; }
.sp-6 em { letter-spacing: .6px; }
.sp-7 em { letter-spacing: .74px; }
.hdr-fill {
  flex: 1;
}
.dt-footer {
  height: 27px;
  flex: none;
  display: flex;
  align-items: center;
  background: #ebeced;
  border-top: 1px solid #ccc;
}
.ft-group {
  height: 100%;
  display: grid;
  grid-template-columns: 37px 67px 55px 37px 56px 65px 77px 66px 63px 62px;
}
.ft {
  display: flex;
  align-items: center;
  justify-content: center;
  padding-left: 2px;
  border-right: 1px solid #d4d4d4;
  color: #222;
  letter-spacing: .3px;
  white-space: nowrap;
}
.ft-active {
  background: #4c9ed9;
  color: #fff;
}
.ft-last {
  border-right: 0;
}
.ft-search {
  width: 31px;
  height: 23px;
  margin-left: 10px;
  display: flex;
  align-items: center;
  justify-content: center;
  background: #fff;
  border: 1px solid #bbb;
  border-radius: 2px;
}
.ft-timer {
  margin-left: auto;
  padding-right: 4px;
}
.ft-clear {
  height: 100%;
  display: flex;
  align-items: center;
  padding: 0 8px 0 7px;
  border-left: 1px solid #d4d4d4;
  color: #222;
}
```
